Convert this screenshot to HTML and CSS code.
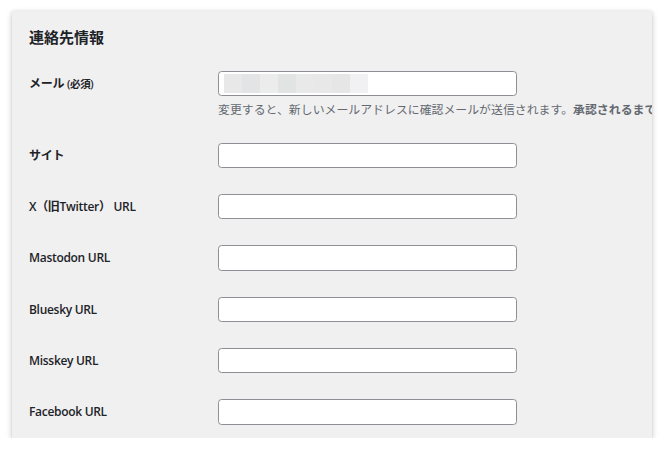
FILE: index.html
```html
<!DOCTYPE html>
<html lang="ja">
<head>
<meta charset="utf-8">
<title>連絡先情報</title>
<link rel="stylesheet" href="styles.css">
</head>
<body>
<div class="card">
  <h2 class="title">連絡先情報</h2>
  <div class="form-table">
    <div class="row">
      <label class="label">メール <span class="req">(必須)</span></label>
      <div class="field">
        <div class="field-wrap">
          <input class="input" type="text">
          <div class="mosaic">
            <span class="m m1"></span><span class="m m2"></span><span class="m m3"></span><span class="m m4"></span><span class="m m5"></span><span class="m m6"></span><span class="m m7"></span><span class="m m8"></span>
          </div>
        </div>
        <p class="desc">変更すると、新しいメールアドレスに確認メールが送信されます。<strong>承認されるまで新しいアドレスは有効になりません。</strong></p>
      </div>
    </div>
    <div class="row">
      <label class="label">サイト</label>
      <div class="field"><input class="input" type="text"></div>
    </div>
    <div class="row">
      <label class="label">X（旧Twitter） URL</label>
      <div class="field"><input class="input" type="text"></div>
    </div>
    <div class="row">
      <label class="label">Mastodon URL</label>
      <div class="field"><input class="input" type="text"></div>
    </div>
    <div class="row">
      <label class="label">Bluesky URL</label>
      <div class="field"><input class="input" type="text"></div>
    </div>
    <div class="row">
      <label class="label">Misskey URL</label>
      <div class="field"><input class="input" type="text"></div>
    </div>
    <div class="row">
      <label class="label">Facebook URL</label>
      <div class="field"><input class="input" type="text"></div>
    </div>
  </div>
</div>
</body>
</html>
```

FILE: styles.css
```css
html, body {
  margin: 0;
  padding: 0;
  background: #ffffff;
}
body {
  font-family: "Open Sans", "Noto Sans CJK JP", sans-serif;
  color: #1d2327;
  padding: 10.5px 12px 0;
}
.card {
  background: #f0f0f1;
  height: 427px;
  box-sizing: border-box;
  padding: 16px 0 0 17px;
  overflow: hidden;
  box-shadow: 0 2px 6px rgba(0, 0, 0, 0.22), 0 0 2px rgba(0, 0, 0, 0.08);
}
.title {
  margin: 0;
  font-size: 15px;
  line-height: 20px;
  font-weight: 700;
  color: #1d2327;
}
.form-table {
  margin-top: 11.5px;
}
.row {
  display: grid;
  grid-template-columns: 189px 1fr;
  padding: 13px 0;
}
.label {
  font-size: 12px;
  font-weight: 600;
  letter-spacing: -0.3px;
  line-height: 25.3px;
  color: #1d2327;
  white-space: nowrap;
}
.req {
  font-size: 10.5px;
  font-weight: 600;
}
.field {
  min-width: 0;
}
.field-wrap {
  position: relative;
  width: 299px;
}
.input {
  display: block;
  width: 299px;
  height: 25.3px;
  box-sizing: border-box;
  margin: 0;
  border: 1px solid #8c8f94;
  border-radius: 3.5px;
  background: #ffffff;
  padding: 0 6px;
}
.mosaic {
  position: absolute;
  left: 6px;
  top: 3px;
  height: 19px;
  display: flex;
}
.m {
  width: 18px;
  height: 19px;
  display: block;
}
.m1 { background: #e8e8e8; }
.m2 { background: #e3e4e5; }
.m3 { background: #ececec; }
.m4 { background: #e2e4e3; }
.m5 { background: #e9e9e9; }
.m6 { background: #e8e8e8; }
.m7 { background: #e6e6e6; }
.m8 { background: #f1f1f3; }
.desc {
  margin: 4.5px 0 0;
  font-size: 11.9px;
  line-height: 16px;
  color: #646970;
  white-space: nowrap;
}
.desc strong {
  font-weight: 700;
}
```
